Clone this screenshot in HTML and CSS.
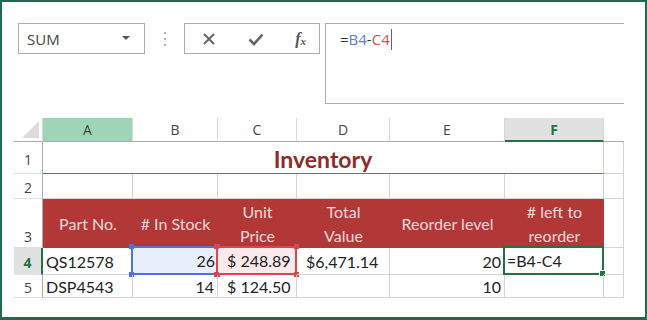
FILE: index.html
```html
<!DOCTYPE html>
<html lang="en">
<head>
    <meta charset="UTF-8">
    <title>Inventory</title>
    <link rel="stylesheet" href="styles.css">
</head>
<body>
    <div class="frame">
        <!-- Formula bar -->
        <div class="toolbar">
            <div class="name-box">
                <span>SUM</span>
                <span class="caret-down"></span>
            </div>
            <div class="dots"><i></i><i></i><i></i></div>
            <div class="fx-buttons">
                <svg width="14" height="14" viewBox="0 0 14 14"><path d="M2 2 L12 12 M12 2 L2 12" stroke="#666" stroke-width="2" fill="none"/></svg>
                <svg width="16" height="14" viewBox="0 0 16 14"><path d="M1.5 7.5 L6 12 L14.5 2.5" stroke="#666" stroke-width="2.6" fill="none"/></svg>
                <span class="fx">f<sub>x</sub></span>
            </div>
            <div class="formula-box">
                <span class="ref-eq">=</span><span class="ref-b">B4</span><span class="ref-eq">-</span><span class="ref-c">C4</span><span class="cursor"></span>
            </div>
        </div>

        <!-- Sheet -->
        <div class="sheet">
            <div class="corner"></div>
            <div class="col-head active-col">A</div>
            <div class="col-head">B</div>
            <div class="col-head">C</div>
            <div class="col-head">D</div>
            <div class="col-head">E</div>
            <div class="col-head current-col">F</div>
            <div class="col-head blank"></div>

            <div class="row-head">1</div>
            <div class="title">Inventory</div>
            <div class="cell"></div>

            <div class="row-head">2</div>
            <div class="cell"></div>
            <div class="cell"></div>
            <div class="cell"></div>
            <div class="cell"></div>
            <div class="cell"></div>
            <div class="cell"></div>
            <div class="cell"></div>

            <div class="row-head bottom">3</div>
            <div class="hdr">Part No.</div>
            <div class="hdr"># In Stock</div>
            <div class="hdr">Unit<br>Price</div>
            <div class="hdr">Total<br>Value</div>
            <div class="hdr">Reorder level</div>
            <div class="hdr"># left to<br>reorder</div>
            <div class="cell"></div>

            <div class="row-head current-row">4</div>
            <div class="cell">QS12578</div>
            <div class="cell num">
                <div class="ref-box blue"><b class="h tl"></b><b class="h tr"></b><b class="h bl"></b><b class="h br"></b>26</div>
            </div>
            <div class="cell">
                <div class="ref-box red"><b class="h tl"></b><b class="h tr"></b><b class="h bl"></b><b class="h br"></b>$ 248.89</div>
            </div>
            <div class="cell money">$6,471.14</div>
            <div class="cell num">20</div>
            <div class="cell">
                <div class="active-cell">=B4-C4<b class="fill-handle"></b></div>
            </div>
            <div class="cell"></div>

            <div class="row-head">5</div>
            <div class="cell">DSP4543</div>
            <div class="cell num">14</div>
            <div class="cell money">$ 124.50</div>
            <div class="cell"></div>
            <div class="cell num">10</div>
            <div class="cell"></div>
            <div class="cell"></div>
        </div>
    </div>
</body>
</html>
```

FILE: styles.css
```css
body {
    margin: 0;
    width: 647px;
    height: 320px;
    background: #ffffff;
    font-family: 'Lato', 'Open Sans', sans-serif;
    color: #222;
}

.frame {
    box-sizing: border-box;
    width: 647px;
    height: 320px;
    border: 2px solid #1f6b4c;
    border-bottom-width: 3px;
}

.toolbar {
    display: flex;
    align-items: flex-start;
    margin: 21px 0 0 16px;
}

.name-box {
    box-sizing: border-box;
    width: 127px;
    height: 31px;
    border: 1px solid #ababab;
    display: flex;
    align-items: center;
    justify-content: space-between;
    padding: 0 14px 0 8px;
    font-family: 'Open Sans', sans-serif;
    font-size: 15px;
    color: #444;
}

.caret-down {
    width: 0;
    height: 0;
    border-left: 4px solid transparent;
    border-right: 4px solid transparent;
    border-top: 4px solid #555;
    margin-top: -2px;
}

.dots {
    width: 39px;
    height: 31px;
    display: flex;
    flex-direction: column;
    align-items: center;
    justify-content: center;
    gap: 4px;
}

.dots i {
    display: block;
    width: 2px;
    height: 2px;
    background: #b0b0b0;
}

.fx-buttons {
    box-sizing: border-box;
    width: 136px;
    height: 31px;
    border: 1px solid #ababab;
    display: flex;
    align-items: center;
    justify-content: space-between;
    padding: 0 13px 0 17px;
}

.fx {
    font-family: 'Liberation Serif', serif;
    font-style: italic;
    font-weight: bold;
    font-size: 16px;
    color: #555;
    line-height: 1;
}

.fx sub {
    font-size: 11px;
    vertical-align: -1px;
}

.formula-box {
    box-sizing: border-box;
    width: 299px;
    height: 81px;
    margin-left: 5px;
    border: 1px solid #ababab;
    border-right: none;
    padding: 5px 0 0 14px;
    font-family: 'Open Sans', sans-serif;
    font-size: 15px;
    display: flex;
    align-items: flex-start;
}

.ref-eq { color: #333; }
.ref-b { color: #5a7ee0; }
.ref-c { color: #e0474f; }

.cursor {
    display: inline-block;
    width: 1px;
    height: 21px;
    background: #666;
    margin-left: 1px;
}

.sheet {
    display: grid;
    grid-template-columns: 29px 90px 85px 79px 93px 115px 99px 20px;
    grid-template-rows: 24px 32px 25px 49px 27px 23px;
    margin: 14px 0 0 12px;
    width: 610px;
    font-size: 16px;
}

.corner {
    position: relative;
    border-bottom: 1px solid #ababab;
    border-right: 1px solid #d4d4d4;
}

.corner::after {
    content: "";
    position: absolute;
    right: 3px;
    bottom: 3px;
    width: 0;
    height: 0;
    border-left: 17px solid transparent;
    border-bottom: 17px solid #dcdcdc;
}

.col-head {
    box-sizing: border-box;
    border-bottom: 1px solid #ababab;
    border-right: 1px solid #d8d8d8;
    display: flex;
    align-items: center;
    justify-content: center;
    font-family: 'Open Sans', sans-serif;
    font-size: 14px;
    color: #444;
}

.col-head.active-col {
    background: #9fd5b7;
}

.col-head.current-col {
    background: #e1e1e1;
    color: #217346;
    font-weight: bold;
    border-bottom: 2px solid #217346;
}

.col-head.blank {
    border-right: none;
}

.row-head {
    box-sizing: border-box;
    border-right: 1px solid #ababab;
    border-bottom: 1px solid #e0e0e0;
    display: flex;
    align-items: center;
    justify-content: center;
    font-family: 'Open Sans', sans-serif;
    font-size: 14px;
    color: #444;
    padding-top: 3px;
}

.row-head.bottom {
    align-items: flex-end;
    padding-bottom: 1px;
}

.row-head.current-row {
    background: #e1e1e1;
    color: #217346;
    font-weight: bold;
    border-right: 2px solid #217346;
}

.title {
    grid-column: span 6;
    box-sizing: border-box;
    border-bottom: 1px solid #c84b4b;
    border-right: 1px solid #d4d4d4;
    display: flex;
    align-items: center;
    justify-content: center;
    font-size: 23px;
    font-weight: bold;
    color: #8e2b2b;
    padding-top: 3px;
}

.cell {
    box-sizing: border-box;
    border-right: 1px solid #d4d4d4;
    border-bottom: 1px solid #d4d4d4;
    display: flex;
    align-items: center;
    padding: 0 3px;
    white-space: nowrap;
    position: relative;
}

.cell.num {
    justify-content: flex-end;
}

.cell.money {
    padding-left: 9px;
}

.hdr {
    background: #b23838;
    color: #f6d9d9;
    display: flex;
    align-items: center;
    justify-content: center;
    text-align: center;
    line-height: 24px;
    font-size: 16px;
    padding-top: 1px;
}

.ref-box {
    position: absolute;
    left: -2px;
    right: -1px;
    top: -2px;
    bottom: -1px;
    display: flex;
    align-items: center;
    padding: 0 4px;
}

.ref-box.blue {
    justify-content: flex-end;
    background: #e9eefb;
    border: 2px solid #4e72da;
    padding-right: 1px;
}

.ref-box.red {
    background: #fbeaeb;
    border: 2px solid #e1434d;
    padding-left: 9px;
}

.h {
    position: absolute;
    width: 5px;
    height: 5px;
}

.blue .h { background: #4e72da; }
.red .h { background: #e1434d; }

.h.tl { left: -4px; top: -4px; }
.h.tr { right: -4px; top: -4px; }
.h.bl { left: -4px; bottom: -4px; }
.h.br { right: -4px; bottom: -4px; }

.active-cell {
    position: absolute;
    left: -2px;
    right: -1px;
    top: -2px;
    bottom: -1px;
    border: 2px solid #217346;
    display: flex;
    align-items: center;
    padding-left: 2px;
    background: #fff;
}

.fill-handle {
    position: absolute;
    right: -4px;
    bottom: -4px;
    width: 5px;
    height: 5px;
    background: #217346;
    border: 1px solid #fff;
}
```
